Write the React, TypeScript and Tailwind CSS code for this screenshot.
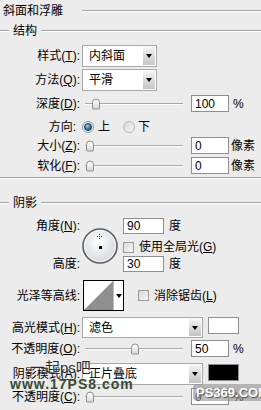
import type { ReactNode } from "react";

const Groove = ({ className = "" }: { className?: string }) => (
  <div className={"h-[2px] border-t border-t-[#a3a3a3] border-b border-b-white " + className} />
);

const U = ({ children }: { children: ReactNode }) => <span className="underline underline-offset-1">{children}</span>;

const Label = ({ children, w = "w-[80px]" }: { children: ReactNode; w?: string }) => (
  <div className={w + " shrink-0 text-right whitespace-nowrap"}>{children}</div>
);

const Arrow = () => <div className="h-0 w-0 border-x-[3px] border-x-transparent border-t-[4px] border-t-black" />;

const Select = ({ value, w }: { value: string; w: string }) => (
  <div className={w + " ml-[2px] flex h-full border border-[#a8a8a8] bg-white"}>
    <div className="flex flex-1 items-center pl-[6px]">{value}</div>
    <div className="m-[1px] flex w-[12px] items-center justify-center bg-gradient-to-b from-[#f4f4f4] to-[#c4c4c4]">
      <Arrow />
    </div>
  </div>
);

const Input = ({ value, className = "" }: { value: string; className?: string }) => (
  <div className={"flex h-full w-[38px] items-center border border-[#8f8f8f] bg-white pl-[3px] " + className}>{value}</div>
);

const Slider = ({ pos }: { pos: number }) => (
  <div className="relative ml-[5px] h-full w-[98px]">
    <div className="absolute left-0 right-0 top-1/2 h-[2px] -translate-y-1/2 border-t border-t-[#a9a9a9] border-b border-b-white" />
    <div
      className="absolute top-1/2 h-[11px] w-[8px] -translate-y-1/2 rounded-t-[4px] rounded-b-[1px] border border-[#8d8d8d] bg-gradient-to-b from-white to-[#d8d8d8]"
      style={{ left: pos }}
    />
  </div>
);

const Checkbox = () => (
  <div className="h-[11px] w-[11px] shrink-0 border border-[#9a9a9a] bg-gradient-to-br from-[#d9d9d9] to-[#f6f6f6]" />
);

const Radio = ({ checked }: { checked?: boolean }) =>
  checked ? (
    <div className="flex h-[12px] w-[12px] items-center justify-center rounded-full border border-[#8796a4] bg-[#e9eef2]">
      <div className="h-[8px] w-[8px] rounded-full border border-[#1d3f5c] bg-[radial-gradient(circle_at_40%_35%,#9fd0f0,#2a6b9c_60%,#163a5a)]" />
    </div>
  ) : (
    <div className="h-[12px] w-[12px] rounded-full border border-[#b9b9b9] bg-gradient-to-br from-[#d6d6d6] to-[#f8f8f8]" />
  );

const AngleDial = () => (
  <svg width="38" height="38" viewBox="0 0 38 38">
    <defs>
      <radialGradient id="dial" cx="45%" cy="40%" r="60%">
        <stop offset="0%" stopColor="#ffffff" />
        <stop offset="100%" stopColor="#d4d7dc" />
      </radialGradient>
    </defs>
    <circle cx="19" cy="19" r="17" fill="url(#dial)" stroke="#5b5e63" strokeWidth="1.6" />
    <circle cx="19" cy="19" r="15.6" fill="none" stroke="#ffffff" strokeWidth="0.8" />
    <rect x="18" y="19" width="3" height="3" fill="#000" />
    <g fill="#333">
      <rect x="18" y="7" width="1" height="1" />
      <rect x="18" y="11" width="1" height="1" />
      <rect x="16" y="9" width="1" height="1" />
      <rect x="20" y="9" width="1" height="1" />
      <rect x="18" y="9" width="1" height="1" />
    </g>
  </svg>
);

const Contour = () => (
  <div className="ml-[3px] flex h-full w-[41px] border border-black bg-white">
    <svg width="29" height="29" viewBox="0 0 29 29" className="shrink-0">
      <polygon points="0,29 29,0 29,29" fill="#8f8f8f" />
    </svg>
    <div className="flex flex-1 items-center justify-center border-l border-l-[#bdbdbd]">
      <Arrow />
    </div>
  </div>
);

export default function App() {
  return (
    <div className="relative h-[410px] w-[261px] overflow-hidden bg-[#ececec] font-['Liberation_Sans','Noto_Sans_CJK_SC',sans-serif] text-[12px] leading-none text-black">
      <div className="flex h-[21px] items-center pl-[3px]">
        <span className="w-[79px]">斜面和浮雕</span>
        <Groove className="flex-1" />
      </div>
      <div className="flex h-[20px] items-center">
        <Groove className="w-[9px]" />
        <span className="px-[4px]">结构</span>
        <Groove className="flex-1" />
      </div>

      <div className="mt-[4px] flex h-[22px] items-center">
        <Label>
          样式(<U>T</U>):
        </Label>
        <Select value="内斜面" w="w-[75px]" />
      </div>
      <div className="mt-[2px] flex h-[22px] items-center">
        <Label>
          方法(<U>Q</U>):
        </Label>
        <Select value="平滑" w="w-[75px]" />
      </div>
      <div className="mt-[4px] flex h-[17px] items-center">
        <Label>
          深度(<U>D</U>):
        </Label>
        <Slider pos={7} />
        <Input value="100" className="ml-[8px]" />
        <span className="ml-[4px]">%</span>
      </div>
      <div className="mt-[7px] flex h-[16px] items-center">
        <Label w="w-[76px]">方向:</Label>
        <div className="ml-[6px] flex items-center gap-[4px]">
          <Radio checked />
          <span>上</span>
        </div>
        <div className="ml-[13px] flex items-center gap-[3px]">
          <Radio />
          <span>下</span>
        </div>
      </div>
      <div className="mt-[2px] flex h-[17px] items-center">
        <Label>
          大小(<U>Z</U>):
        </Label>
        <Slider pos={1} />
        <Input value="0" className="ml-[8px]" />
        <span className="ml-[2px]">像素</span>
      </div>
      <div className="mt-[3px] flex h-[17px] items-center">
        <Label>
          软化(<U>F</U>):
        </Label>
        <Slider pos={1} />
        <Input value="0" className="ml-[8px]" />
        <span className="ml-[2px]">像素</span>
      </div>

      <Groove className="mt-[3px]" />

      <div className="mt-[14px] flex h-[20px] items-center">
        <Groove className="w-[9px]" />
        <span className="px-[4px]">阴影</span>
        <Groove className="flex-1" />
      </div>

      <div className="mt-[5px] flex h-[56px]">
        <div className="flex w-[80px] flex-col justify-between pb-[4px] pt-[2px]">
          <Label>
            角度(<U>N</U>):
          </Label>
          <Label>高度:</Label>
        </div>
        <div className="ml-[1px] mt-[9px]">
          <AngleDial />
        </div>
        <div className="ml-[4px] flex flex-col">
          <div className="flex h-[16px] items-center">
            <Input value="90" className="w-[41px]" />
            <span className="ml-[5px]">度</span>
          </div>
          <div className="mt-[6px] flex h-[14px] items-center gap-[5px]">
            <Checkbox />
            <span>
              使用全局光(<U>G</U>)
            </span>
          </div>
          <div className="mt-[2px] flex h-[16px] items-center">
            <Input value="30" className="w-[41px]" />
            <span className="ml-[5px]">度</span>
          </div>
        </div>
      </div>

      <div className="mt-[6px] flex h-[31px] items-center">
        <Label>光泽等高线:</Label>
        <Contour />
        <div className="ml-[14px] flex items-center gap-[5px]">
          <Checkbox />
          <span>
            消除锯齿(<U>L</U>)
          </span>
        </div>
      </div>

      <div className="mt-[6px] flex h-[21px] items-center">
        <Label>
          高光模式(<U>H</U>):
        </Label>
        <Select value="滤色" w="w-[121px]" />
        <div className="ml-[5px] h-[17px] w-[31px] self-start border border-[#8f8f8f] bg-white" />
      </div>
      <div className="mt-[2px] flex h-[17px] items-center">
        <Label>
          不透明度(<U>O</U>):
        </Label>
        <Slider pos={46} />
        <Input value="50" className="ml-[8px]" />
        <span className="ml-[4px]">%</span>
      </div>
      <div className="mt-[6px] flex h-[22px] items-center">
        <Label>
          阴影模式(<U>A</U>):
        </Label>
        <Select value="正片叠底" w="w-[121px]" />
        <div className="ml-[5px] mt-[1px] h-[17px] w-[31px] self-start border border-[#8f8f8f] bg-black" />
      </div>
      <div className="mt-[3px] flex h-[17px] items-center">
        <Label>
          不透明度(<U>C</U>):
        </Label>
        <Slider pos={1} />
        <Input value="0" className="ml-[8px]" />
        <span className="ml-[4px]">%</span>
      </div>

      <div className="absolute left-[30px] top-[360px] text-[15px] text-[#2a2a2a] [text-shadow:0_0_2px_#fff]">一起ps吧</div>
      <div className="absolute left-[10px] top-[377px] text-[14px] font-bold tracking-[1px] text-[#3d4a3a] [text-shadow:0_0_2px_#cfe8c8]">
        www.17PS8.com
      </div>
      <div className="absolute left-[193px] top-[384px] rounded-[4px] bg-[#8f8f8f]/60 px-[3px] py-[2px] text-[13px] font-bold text-white [text-shadow:1px_1px_1px_#555]">
        PS369.COM
      </div>
    </div>
  );
}
